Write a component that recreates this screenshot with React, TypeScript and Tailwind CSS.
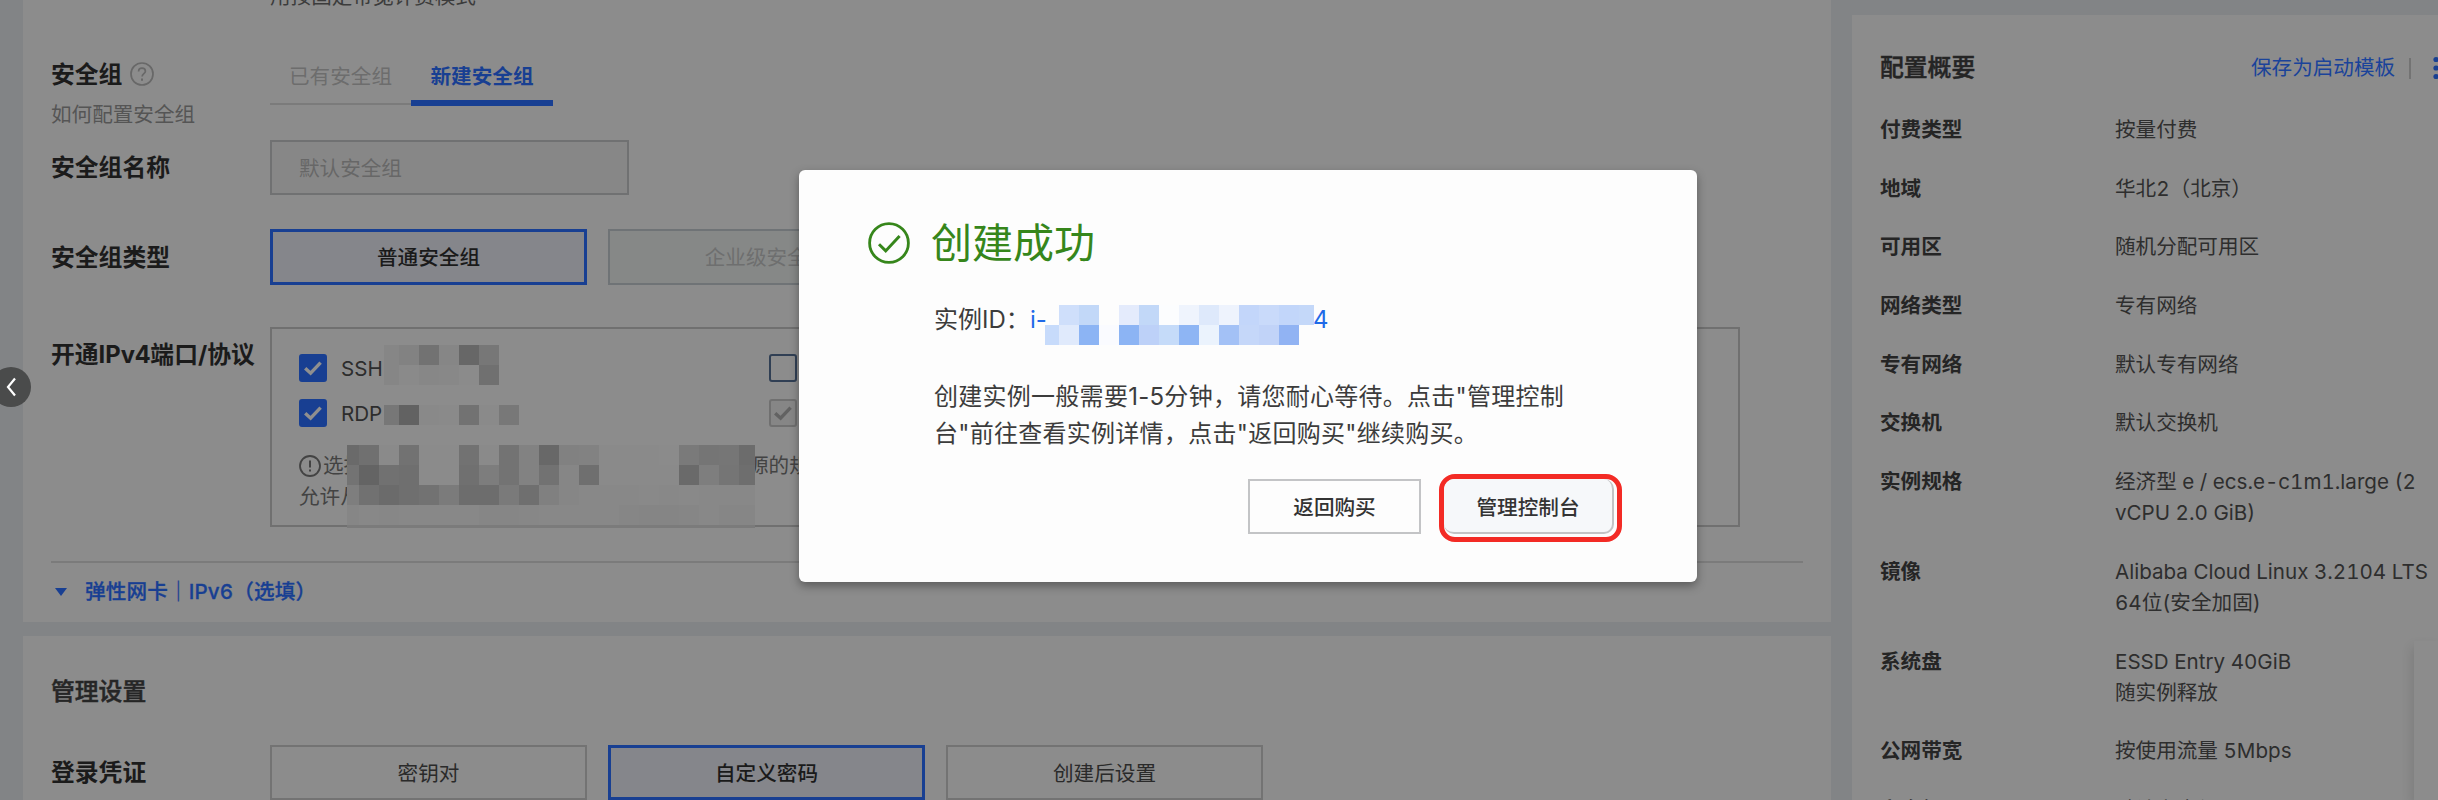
import type { ReactNode } from "react";

type Tile = string | null;

const summary: { label: string; value: string[] }[] = [
  { label: "付费类型", value: ["按量付费"] },
  { label: "地域", value: ["华北2（北京）"] },
  { label: "可用区", value: ["随机分配可用区"] },
  { label: "网络类型", value: ["专有网络"] },
  { label: "专有网络", value: ["默认专有网络"] },
  { label: "交换机", value: ["默认交换机"] },
  { label: "实例规格", value: ["经济型 e / ecs.e-c1m1.large (2", "vCPU 2.0 GiB)"] },
  { label: "镜像", value: ["Alibaba Cloud Linux 3.2104 LTS", "64位(安全加固)"] },
  { label: "系统盘", value: ["ESSD Entry 40GiB", "随实例释放"] },
  { label: "公网带宽", value: ["按使用流量 5Mbps"] },
  { label: "安全组", value: ["默认安全组"] }
];

// each entry is one row of 20px tiles, the first tile may be narrower
const sshMask: Tile[][] = [
  ["#868686", "#828282", "#727272", "#868686", "#676767", "#777777"],
  ["#868686", "#8a8a8a", "#878787", "#888888", "#8b8b8b", "#707070"]
];

const rdpMask: Tile[][] = [["#777777", "#626262", "#898989", "#8a8a8a", "#727272", "#8a8a8a", "#787878"]];

const hintMask: Tile[][] = [
  ["#6a6a6a", "#707070", "#8a8a8a", "#727272", "#8b8b8b", "#8b8b8b", "#727272", "#8a8a8a", "#737373", "#828282", "#686868", "#818181", "#828282", "#8a8a8a", "#8a8a8a", "#8a8a8a", "#8b8b8b", "#7a7a7a", "#757575", "#767676", "#6c6c6c"],
  ["#737373", "#646464", "#717171", "#6f6f6f", "#8b8b8b", "#8b8b8b", "#707070", "#7d7d7d", "#737373", "#828282", "#727272", "#868686", "#6f6f6f", "#8a8a8a", "#8a8a8a", "#8a8a8a", "#8a8a8a", "#6a6a6a", "#7e7e7e", "#757575", "#6e6e6e"],
  ["#7e7e7e", "#717171", "#6b6b6b", "#6f6f6f", "#727272", "#7b7b7b", "#6d6d6d", "#6d6d6d", "#7a7a7a", "#6f6f6f", "#808080", "#868686", "#888888", "#888888", "#888888", "#898989", "#888888", "#898989", "#888888", "#888888", "#888888"],
  ["#868686", "#888888", "#878787", "#888888", "#888888", "#888888", "#888888", "#868686", "#868686", "#878787", "#888888", "#888888", "#888888", "#888888", "#868686", "#858585", "#858585", "#868686", "#888888", "#868686", "#868686"]
];

const idMask: Tile[][] = [
  [null, "#cfdffb", "#c2d8f8", null, "#e4ebfc", "#c2d8f8", "#fcfdfe", "#eff4fd", "#dee9fb", "#eef3fd", "#c3d6fa", "#c9dafa", "#c2d6fa", "#c4d8f9"],
  ["#c7dbfb", "#e0eafc", "#8cb4f4", "#fafbff", "#8cb4f4", "#bdd1f8", "#c5dbf9", "#8eb5f4", "#ebf3fd", "#a3c1f6", "#c5d7f9", "#c1d3f8", "#91b3f3", null]
];

function Mosaic({ rows, first, last }: { rows: Tile[][]; first: number; last?: number }) {
  return (
    <div>
      {rows.map((row, y) => (
        <div key={y} className="flex h-5">
          {row.map((color, x) => (
            <div
              key={x}
              className="h-5 shrink-0"
              style={{
                width: x === 0 ? first : last && x === row.length - 1 ? last : 20,
                backgroundColor: color ?? "transparent"
              }}
            />
          ))}
        </div>
      ))}
    </div>
  );
}

function Label({ children }: { children: ReactNode }) {
  return (
    <div className="w-[219px] shrink-0 whitespace-nowrap pt-[1px] text-[23.8px] font-bold text-[#1b1b1b]">{children}</div>
  );
}

function Option({ state, children }: { state: "active" | "normal" | "disabled"; children: ReactNode }) {
  const styles = {
    active: "border-[3px] border-[#183f92] bg-[#85868b] font-medium text-[#1a1a1a]",
    normal: "border-2 border-[#737373] text-[#2a2a2a]",
    disabled: "border-2 border-[#6f7376] bg-[#868887] text-[#6e6f6f]"
  };
  return (
    <div className={`flex h-full w-[317px] shrink-0 items-center justify-center pt-[3px] ${styles[state]}`}>{children}</div>
  );
}

function Checkbox({ state }: { state: "checked" | "empty" | "locked" }) {
  const styles = {
    checked: "border-[#183f92] bg-[#183f92] text-[#8f8f8f]",
    empty: "border-[#303f54] text-transparent",
    locked: "border-[#707070] bg-[#868686] text-[#626262]"
  };
  return (
    <div className={`flex size-7 shrink-0 items-center justify-center rounded-[3px] border-2 ${styles[state]}`}>
      <svg viewBox="0 0 20 20" className="size-5" fill="none" stroke="currentColor" strokeWidth="3.4">
        <path d="M2.2 10.2 7.6 15.2 17.6 4.6" />
      </svg>
    </div>
  );
}

function SecurityGroupSection() {
  return (
    <section className="flex h-[622px] flex-col overflow-hidden bg-[#8c8c8c] pl-7">
      <p className="-mt-[15px] ml-[219px] h-[23px] shrink-0 leading-6 text-[#3c3c3c]">用按固定带宽计费模式</p>

      <div className="mt-12 flex h-[84px] shrink-0">
        <div className="w-[219px]">
          <div className="flex h-9 items-center gap-2">
            <span className="pt-[1px] text-[23.8px] font-bold text-[#1b1b1b]">安全组</span>
            <svg viewBox="0 0 24 24" className="size-6" fill="none" stroke="#686868" strokeWidth="1.7">
              <circle cx="12" cy="12" r="11" />
              <path d="M8.6 9.4c0-2 1.5-3.3 3.4-3.3s3.4 1.3 3.4 3.1c0 2.3-3.3 2.5-3.3 5.3" />
              <path d="M12 16.6v2.2" strokeWidth="2" />
            </svg>
          </div>
          <div className="mt-2 leading-[30px] text-[#555555]">如何配置安全组</div>
        </div>
        <div className="flex h-[50px]">
          <div className="flex h-[49px] w-[141px] justify-center border-b-2 border-[#7b7b7b] pt-[6px] leading-[30px] text-[#6d6d6d]">
            已有安全组
          </div>
          <div className="flex h-[50px] w-[142px] justify-center border-b-[6px] border-[#183f92] pt-[6px] font-bold leading-[30px] text-[#183f92]">
            新建安全组
          </div>
        </div>
      </div>

      <div className="flex h-[55px] shrink-0 items-center">
        <Label>安全组名称</Label>
        <div className="flex h-full w-[359px] items-center border-2 border-[#707172] bg-[#878787] pl-[27px] pt-[3px] text-[#676767]">
          默认安全组
        </div>
      </div>

      <div className="mt-[34px] flex h-14 shrink-0 items-center">
        <Label>安全组类型</Label>
        <div className="flex h-full gap-[21px]">
          <Option state="active">普通安全组</Option>
          <Option state="disabled">企业级安全组</Option>
        </div>
      </div>

      <div className="mt-[42px] flex h-[200px] shrink-0">
        <Label>
          <div className="pt-[9px] leading-9">开通IPv4端口/协议</div>
        </Label>
        <div className="relative h-full w-[1470px] border-2 border-[#707070] pl-[27px] pt-[25px]">
          <div className="grid grid-cols-[470px_1fr] gap-y-[17px] text-[#2d2d2d]">
            <div className="flex h-7 items-center gap-[14px]">
              <Checkbox state="checked" />
              <span className="pt-[2px]">SSH</span>
            </div>
            <Checkbox state="empty" />
            <div className="flex h-7 items-center gap-[14px]">
              <Checkbox state="checked" />
              <span className="pt-[2px]">RDP</span>
            </div>
            <Checkbox state="locked" />
          </div>
          <div className="mt-[23px] whitespace-nowrap leading-[31px] text-[#434343]">
            <div className="flex items-center">
              <svg viewBox="0 0 22 22" className="mr-[2px] size-[22px]" fill="none" stroke="#434343" strokeWidth="1.8">
                <circle cx="11" cy="11" r="10" />
                <path d="M11 5.5v7M11 14.4v2.2" strokeWidth="2" />
              </svg>
              <span className="w-[425px]">选择</span>
              <span>源的规则</span>
            </div>
            <div>允许从</div>
          </div>
          <div className="absolute left-[112px] top-[16px]">
            <Mosaic rows={sshMask} first={15} />
          </div>
          <div className="absolute left-[112px] top-[76px]">
            <Mosaic rows={rdpMask} first={15} />
          </div>
          <div className="absolute left-[75px] top-[116px] border-b-[3px] border-[#7b7b7b]">
            <Mosaic rows={hintMask} first={12} last={16} />
          </div>
        </div>
      </div>

      <div className="mr-7 mt-[34px] flex h-[59px] shrink-0 items-center border-t-2 border-[#7b7b7b] font-medium text-[#183f92]">
        <svg viewBox="0 0 12 8" className="ml-1 h-2 w-3" fill="currentColor">
          <path d="M0 0h12L6 8z" />
        </svg>
        <span className="ml-[18px] pt-[2px] tracking-[0.15px] [-webkit-text-stroke:0.3px]">弹性网卡｜IPv6（选填）</span>
      </div>
    </section>
  );
}

function SettingsSection() {
  return (
    <section className="mt-[14px] h-[164px] bg-[#8c8c8c] pl-7 pt-[38px]">
      <h2 className="text-[23.8px] font-medium leading-9 text-[#262626] [-webkit-text-stroke:0.5px]">管理设置</h2>
      <div className="mt-[35px] flex h-[55px] items-center">
        <Label>登录凭证</Label>
        <div className="flex h-full gap-[21px]">
          <Option state="normal">密钥对</Option>
          <Option state="active">自定义密码</Option>
          <Option state="normal">创建后设置</Option>
        </div>
      </div>
    </section>
  );
}

function Summary() {
  return (
    <aside className="relative ml-[21px] mt-[15px] h-[785px] w-[586px] overflow-hidden bg-[#8c8c8c] pl-7">
      <div className="mt-9 flex h-[34px] items-center whitespace-nowrap">
        <h2 className="w-[371px] shrink-0 text-[23.8px] font-medium text-[#242424] [-webkit-text-stroke:0.5px]">配置概要</h2>
        <span className="w-[158px] shrink-0">
          <span className="text-[#1a439a]">保存为启动模板</span>
        </span>
        <span className="h-[21px] w-[2px] shrink-0 bg-[#737373]" />
        <svg viewBox="0 0 6 24" className="ml-[22px] h-6 w-[6px] shrink-0" fill="#183f92">
          <circle cx="3" cy="3.5" r="2.6" />
          <circle cx="3" cy="12" r="2.6" />
          <circle cx="3" cy="20.5" r="2.6" />
        </svg>
      </div>
      <dl className="mt-[29px] flex flex-col gap-[27.7px] leading-[31px]">
        {summary.map((item) => (
          <div key={item.label} className="flex whitespace-nowrap">
            <dt className="w-[235px] shrink-0 font-bold text-[#252525]">{item.label}</dt>
            <dd className="text-[#2e2e2e]">
              {item.value.map((line) => (
                <div key={line}>{line}</div>
              ))}
            </dd>
          </div>
        ))}
      </dl>
      <div className="absolute bottom-0 right-0 h-[159px] w-6 bg-[#8c8c8c] shadow-[-2px_6px_12px_rgba(0,0,0,0.12)]" />
    </aside>
  );
}

function SuccessDialog() {
  return (
    <div className="absolute left-[799px] top-[170px] h-[412px] w-[898px] rounded-md bg-[#fdfdfd] pl-[69px] pt-[52px] text-[#3c3c3c] shadow-[0_4px_10px_rgba(0,0,0,0.35)]">
      <div className="flex h-[42px] items-center gap-[21px] text-[#36861b]">
        <svg viewBox="0 0 42 42" className="size-[42px]" fill="none" stroke="currentColor" strokeWidth="2.8">
          <circle cx="21" cy="21" r="19.4" />
          <path d="M11 22.2 17.7 28.9 31.6 14" strokeWidth="3" />
        </svg>
        <h1 className="text-[41px] leading-[42px]">创建成功</h1>
      </div>
      <div className="ml-[66px] mt-9 flex h-10 text-[24px] leading-[40px] normal-nums">
        <span className="w-[96px] whitespace-nowrap">实例ID：</span>
        <div className="relative flex w-[300px] text-[#1f6ae8]">
          <span className="w-[283px]">i-</span>
          <span>4</span>
          <div className="absolute left-[15px] top-[5px]">
            <Mosaic rows={idMask} first={14} last={15} />
          </div>
        </div>
      </div>
      <div className="ml-[66px] mt-[39px] whitespace-nowrap text-[24px] leading-[36.5px] tracking-[0.27px] normal-nums">
        <p>创建实例一般需要1-5分钟，请您耐心等待。点击"管理控制</p>
        <p>台"前往查看实例详情，点击"返回购买"继续购买。</p>
      </div>
      <div className="ml-[380px] mt-[22px] flex items-start font-medium text-[#333333]">
        <button className="mt-[5px] h-[55px] w-[173px] border-2 border-[#c3c4c6] bg-[#fdfdfd] pt-[3px]">返回购买</button>
        <div className="ml-[18px] h-[68px] w-[183px] rounded-[16px] border-[5px] border-[#f32b25]">
          <button className="h-[55px] w-[170px] rounded-[10px] border-b-2 border-r-2 border-[#c3c4c6] bg-[#f6f8fa] pt-[5px]">
            管理控制台
          </button>
        </div>
      </div>
    </div>
  );
}

export default function App() {
  return (
    <div className="relative flex h-[800px] w-[2438px] overflow-hidden bg-[#828486] font-[Inter,'Noto_Sans_CJK_SC',sans-serif] text-[20.6px] tabular-nums">
      <main className="ml-[23px] w-[1808px] shrink-0">
        <SecurityGroupSection />
        <SettingsSection />
      </main>
      <Summary />

      <div className="absolute -left-[9px] top-[367px] flex size-10 items-center justify-center rounded-full bg-[#4a4b4b]">
        <svg viewBox="0 0 12 20" className="h-5 w-3" fill="none" stroke="#ffffff" strokeWidth="2.2">
          <path d="M10 1.5 3 10l7 8.5" />
        </svg>
      </div>
      <SuccessDialog />
    </div>
  );
}
